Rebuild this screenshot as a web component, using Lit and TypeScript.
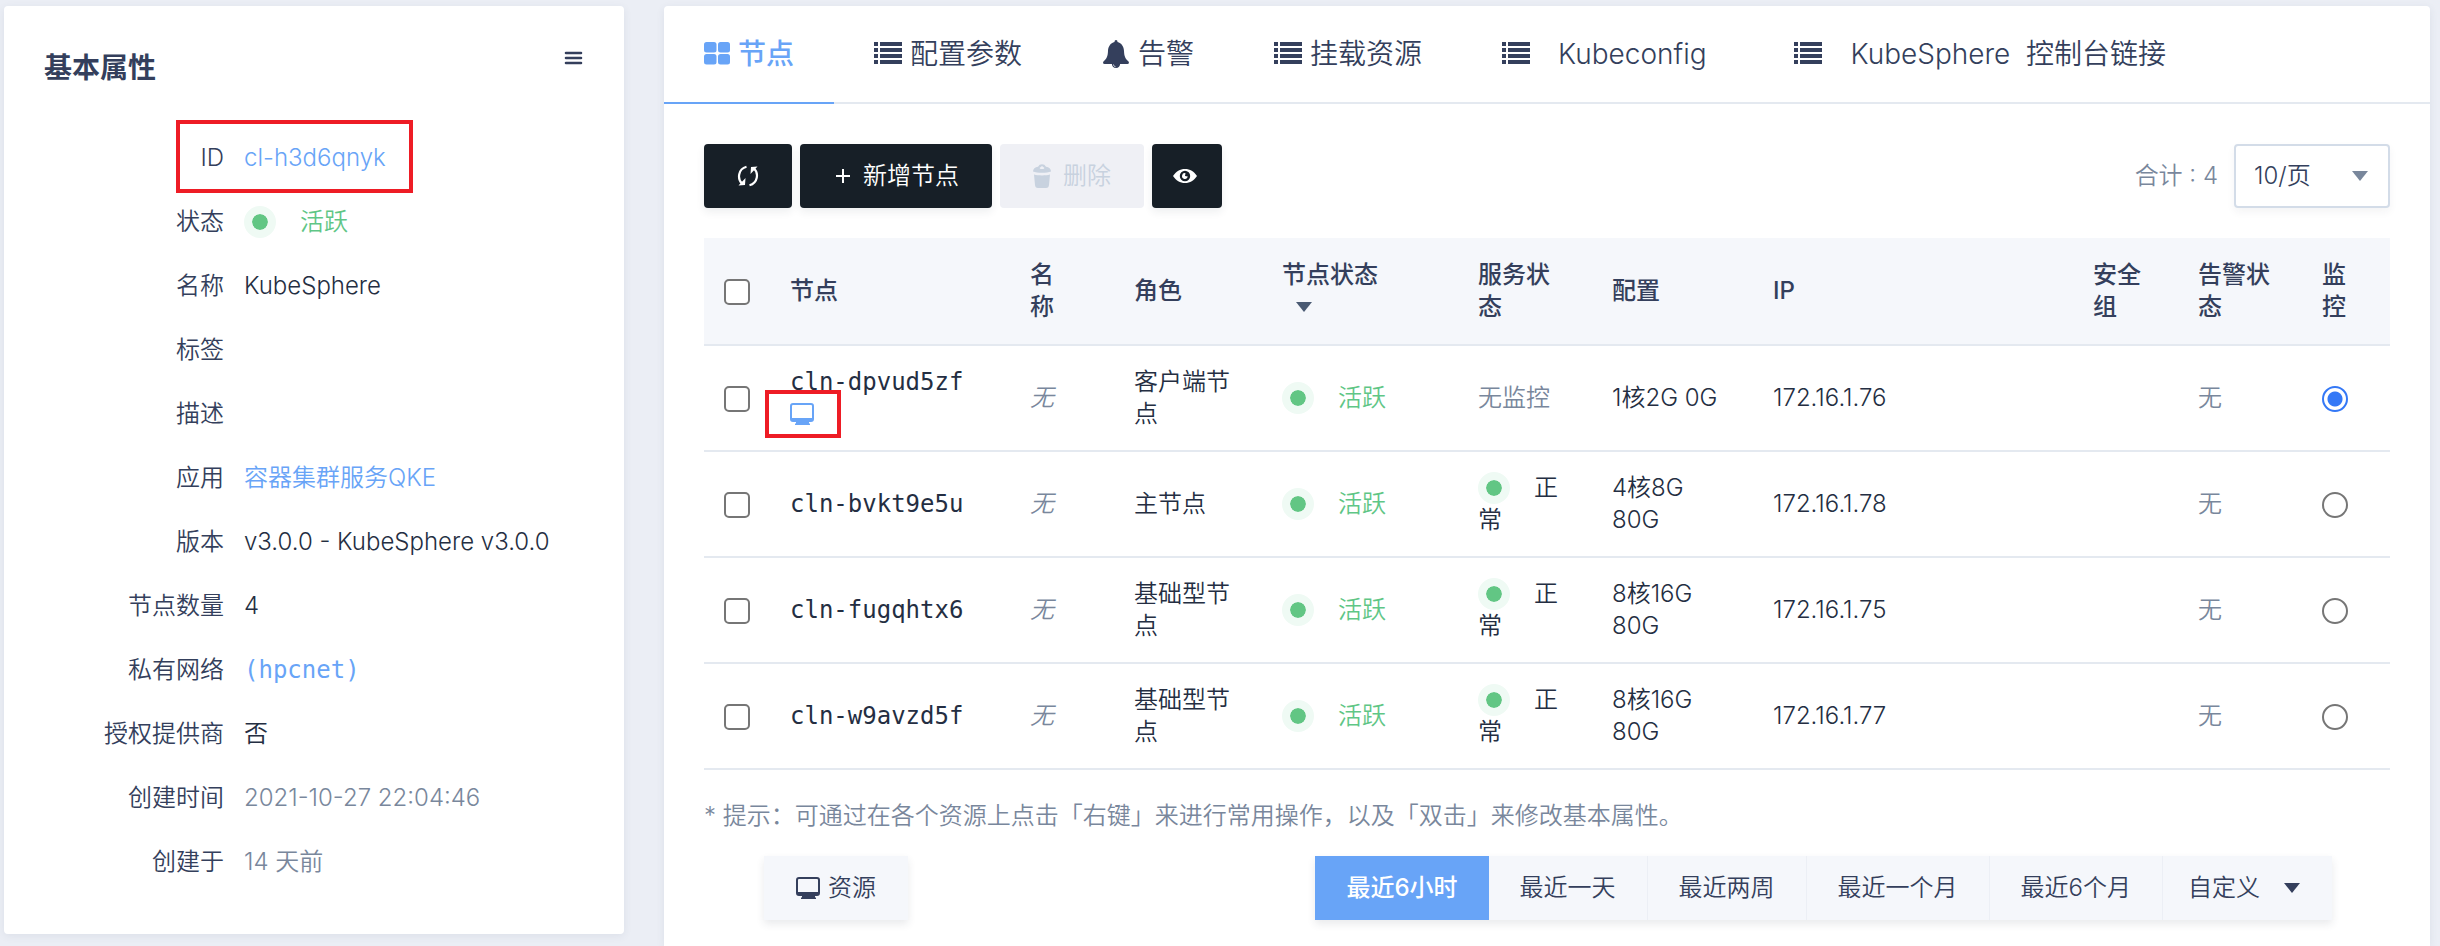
import { LitElement, html, css, svg } from "lit";
import { customElement } from "lit/decorators.js";

const icon = (name: string, w: number, h: number, vb: string, body: unknown) =>
  html`<svg class="icon ${name}" width=${w} height=${h} viewBox=${vb} aria-hidden="true">${body}</svg>`;

const gridIcon = () =>
  icon("grid", 26, 24, "0 0 26 24", svg`
    <rect x="0" y="0" width="12.500" height="10.500" rx="2.500"/><rect x="14" y="0" width="12" height="10.500" rx="2.500"/>
    <rect x="0" y="12" width="12.500" height="10.500" rx="2.500"/><rect x="14" y="12" width="12" height="10.500" rx="2.500"/>`);

const listIcon = () =>
  icon("list", 28, 24, "0 0 28 24", [0, 6, 12, 18].map((i) => svg`
    <rect x="0" y=${i} width="4" height="4"/><rect x="6" y=${i} width="22" height="4"/>`));

const bellIcon = () =>
  icon("bell", 28, 28, "0 0 28 28", svg`
    <path d="M14 0c1 0 1.500.9 1.500 2 4 1 6.300 4.500 6.500 9 .2 5.200 1.200 7.500 4.300 10.200 1 .9.900 2.800-.8 2.800H2.500c-1.700 0-1.800-1.900-.8-2.800C4.800 18.500 5.800 16.200 6 11c.2-4.500 2.500-8 6.500-9 0-1.100.5-2 1.500-2z"/>
    <path d="M9.800 23.500h8.400c0 2.600-1.700 4.500-4.200 4.500s-4.200-1.900-4.200-4.500z"/>
    <path d="M11.500 24.500c0 1.200.8 2 2 2.200" fill="none" stroke="#fff" stroke-width=".8"/>`);

const monitorIcon = () =>
  icon("monitor", 24, 24, "0 0 24 24", svg`
    <path fill-rule="evenodd" d="M3 1h18a3 3 0 0 1 3 3v13a3 3 0 0 1-3 3h-2v1l1 1v1H5v-1l1-1v-1H3a3 3 0 0 1-3-3V4a3 3 0 0 1 3-3zm0 2a1 1 0 0 0-1 1v12h20V4a1 1 0 0 0-1-1z"/>`);

const refreshIcon = () =>
  icon("refresh", 22, 22, "0 0 22 22", svg`
    <path d="M9.500 1.800C1 4 .2 14 5 18.500M12.500 20.200C21 18 21.800 8 17 3.500" fill="none" stroke="currentColor" stroke-width="2.200"/>
    <path d="M1.500 20.500l6.500-.500.500-7zM20.500 1.500L14 2l-.500 7z"/>`);

const plusIcon = () =>
  icon("plus", 18, 14, "0 0 18 14", svg`<path d="M9 0h2v6h6v2h-6v6H9V8H3V6h6z"/>`);

const trashIcon = () =>
  icon("trash", 18, 24, "0 0 18 24", svg`
    <path fill-rule="evenodd" d="M0 7.500C0 5 2 3 5 2.800a4.500 4.500 0 0 1 8 0c3 .2 5 2.200 5 4.700C14 9.200 4 9.200 0 7.500zM6.500 4l2.500-2 2.500 2-1 1h-3z"/>
    <path d="M1 10.500c4 1.200 12 1.200 16 0L16 21c-.2 2-1 3-3 3H5c-2 0-2.800-1-3-3z"/>`);

const eyeIcon = () =>
  icon("eye", 24, 14, "0 0 24 14", svg`
    <path fill-rule="evenodd" d="M12 0c5 0 9 2.500 12 7-3 4.500-7 7-12 7S3 11.500 0 7C3 2.500 7 0 12 0zm0 1.800a5.200 5.200 0 1 0 0 10.400 5.200 5.200 0 0 0 0-10.400zm.5 2.400L12 7l2.800.5a2.900 2.900 0 1 1-2.300-3.300z"/>`);

const menuIcon = () =>
  icon("menu", 20, 14, "0 0 20 14", svg`<path d="M2 2h15M2 7h15M2 12h15" stroke="currentColor" stroke-width="2.600" stroke-linecap="round"/>`);

const caret = () => icon("caret", 16, 10, "0 0 16 10", svg`<path d="M0 0h16L8 10z"/>`);

interface Node {
  id: string;
  role: string;
  service: boolean;
  config: string;
  ip: string;
  console?: boolean;
}

@customElement("app-root")
export class AppRoot extends LitElement {
  static styles = css`
    :host {
      display: flex;
      gap: 40px;
      align-items: stretch;
      box-sizing: border-box;
      height: 100vh;
      overflow: hidden;
      padding: 6px 10px 0 4px;
      background: #ebeef5;
      color: #343f5c;
      font: 350 24px/32px Inter, "Noto Sans CJK SC", sans-serif;
    }
    *, *::after { box-sizing: border-box; }
    button, select, input { font: inherit; color: inherit; margin: 0; }
    a { color: #68a4f7; text-decoration: none; }
    .icon { fill: currentColor; flex: none; display: block; }
    .card {
      background: #fff;
      border-radius: 4px;
      box-shadow: 0 2px 8px rgba(52, 63, 92, 0.08);
    }
    .side { width: 620px; flex: none; align-self: flex-start; padding: 40px; }
    .side-head { display: flex; justify-content: space-between; align-items: flex-start; }
    .side h2 { margin: 0; font-size: 28px; line-height: 44px; font-weight: 600; }
    .menu-btn { border: 0; background: none; padding: 5px 0 0; }
    .props { margin: 36px 0 0; }
    .prop { display: grid; grid-template-columns: 180px 1fr; column-gap: 20px; height: 64px; align-items: center; position: relative; }
    .prop dt { text-align: right; color: #343f5c; }
    .prop dd { margin: 0; color: #242e42; white-space: nowrap; }
    .prop dd.muted { color: #79879c; }
    .mono { font-family: "DejaVu Sans Mono", monospace; }
    .marked::after {
      content: "";
      position: absolute;
      border: 4px solid #ee1c25;
      pointer-events: none;
    }
    .prop.marked::after { left: 132px; top: -6px; width: 237px; height: 73px; }
    .status { display: flex; align-items: center; gap: 24px; color: #5fc686; }
    .dot {
      display: inline-block;
      width: 32px;
      height: 32px;
      border-radius: 50%;
      border: 8px solid #effaf4;
      background: #62c684;
      background-clip: padding-box;
      vertical-align: top;
    }
    .main { flex: 1; min-width: 0; border-bottom-left-radius: 0; border-bottom-right-radius: 0; }
    .tabs { display: flex; border-bottom: 2px solid #e4e9f0; height: 98px; }
    .tab {
      display: flex;
      align-items: center;
      gap: 8px;
      padding: 0 40px;
      margin-bottom: -2px;
      border: 0;
      border-bottom: 2px solid transparent;
      background: none;
      font-size: 28px;
      line-height: 40px;
      white-space: pre;
    }
    .tab.active { color: #68a4f7; border-color: #68a4f7; font-weight: 500; }
    .tab.wide { gap: 28px; }
    .body { padding: 40px; }
    .toolbar { display: flex; gap: 8px; align-items: center; }
    .btn {
      height: 64px;
      border: 0;
      border-radius: 4px;
      background: #171f27;
      color: #fff;
      display: flex;
      align-items: center;
      justify-content: center;
      gap: 12px;
      padding: 0 33px;
      box-shadow: 0 4px 8px rgba(36, 46, 66, 0.08);
    }
    .btn.eye-btn { padding: 0 25px 0 21px; }
    .btn:disabled { background: #eff0f5; color: #c8d2df; box-shadow: none; }
    .total { margin-left: auto; margin-right: 8px; color: #79879c; }
    .picker { position: relative; display: flex; align-items: center; }
    .picker select {
      appearance: none;
      width: 156px;
      height: 64px;
      padding: 0 20px 0 18px;
      border: 2px solid #d3dce8;
      border-radius: 4px;
      background: #fff;
      box-shadow: 0 4px 8px rgba(36, 46, 66, 0.05);
    }
    .picker .icon { position: absolute; right: 22px; color: #79879c; pointer-events: none; }
    table { width: 100%; margin-top: 30px; border-collapse: separate; border-spacing: 0; table-layout: fixed; }
    th, td { text-align: left; vertical-align: middle; padding: 20px; border-bottom: 2px solid #e4e9f0; color: #242e42; }
    th { background: #f5f7fb; color: #343f5c; font-weight: 500; padding-top: 21px; padding-bottom: 21px; }
    .c-check { width: 66px; }
    .c-node { width: 240px; }
    .c-name { width: 104px; }
    .c-role { width: 148px; }
    .c-state { width: 196px; }
    .c-service { width: 134px; }
    .c-config { width: 161px; }
    .c-group { width: 105px; }
    .c-alarm { width: 124px; }
    .c-watch { width: 88px; }
    .narrow { padding-right: 40px; }
    .check { padding-right: 0; }
    td.none { color: #79879c; }
    th .caret { margin: 11px 0 11px 14px; color: #4a5a73; }
    td.console { position: relative; }
    td.console .monitor { color: #68a4f7; margin: 4px 0; }
    td.marked::after { left: -5px; top: 44px; width: 76px; height: 48px; }
    .service .dot { margin-right: 24px; }
    input[type="checkbox"], input[type="radio"] {
      appearance: none;
      display: block;
      width: 26px;
      height: 26px;
      margin-top: 2px;
      border: 2px solid #767676;
      border-radius: 5px;
      background: #fff;
    }
    input[type="radio"] { border-radius: 50%; }
    input[type="radio"]:checked { border-color: #3478f6; background: radial-gradient(circle, #3478f6 7px, #fff 8px); }
    .hint { margin: 30px 0 24px; color: #79879c; }
    .footer { display: flex; justify-content: space-between; padding: 0 58px 0 60px; }
    .group { display: flex; box-shadow: 0 4px 8px rgba(36, 46, 66, 0.1); }
    .seg {
      height: 64px;
      display: flex;
      align-items: center;
      gap: 8px;
      padding: 0 31px;
      border: 0;
      border-right: 1px solid #eceff5;
      background: #f5f7fb;
      white-space: nowrap;
    }
    .seg:only-child { padding: 0 32px; }
    .seg:last-child { border-right: 0; }
    .seg.active { background: #68a4f7; color: #fff; font-weight: 500; border-right: 0; }
    .seg.custom { gap: 24px; padding: 0 32px 0 25px; }
  `;

  private nodes: Node[] = [
    { id: "cln-dpvud5zf", role: "客户端节点", service: false, config: "1核2G 0G", ip: "172.16.1.76", console: true },
    { id: "cln-bvkt9e5u", role: "主节点", service: true, config: "4核8G 80G", ip: "172.16.1.78" },
    { id: "cln-fugqhtx6", role: "基础型节点", service: true, config: "8核16G 80G", ip: "172.16.1.75" },
    { id: "cln-w9avzd5f", role: "基础型节点", service: true, config: "8核16G 80G", ip: "172.16.1.77" },
  ];

  private active() {
    return html`<span class="status"><span class="dot"></span>活跃</span>`;
  }

  private side() {
    return html`
      <aside class="card side">
        <div class="side-head">
          <h2>基本属性</h2>
          <button class="menu-btn" aria-label="菜单">${menuIcon()}</button>
        </div>
        <dl class="props">
          <div class="prop marked"><dt>ID</dt><dd><a href="#">cl-h3d6qnyk</a></dd></div>
          <div class="prop"><dt>状态</dt><dd>${this.active()}</dd></div>
          <div class="prop"><dt>名称</dt><dd>KubeSphere</dd></div>
          <div class="prop"><dt>标签</dt><dd></dd></div>
          <div class="prop"><dt>描述</dt><dd></dd></div>
          <div class="prop"><dt>应用</dt><dd><a href="#">容器集群服务QKE</a></dd></div>
          <div class="prop"><dt>版本</dt><dd>v3.0.0 - KubeSphere v3.0.0</dd></div>
          <div class="prop"><dt>节点数量</dt><dd>4</dd></div>
          <div class="prop"><dt>私有网络</dt><dd><a class="mono" href="#">(hpcnet)</a></dd></div>
          <div class="prop"><dt>授权提供商</dt><dd>否</dd></div>
          <div class="prop"><dt>创建时间</dt><dd class="muted">2021-10-27 22:04:46</dd></div>
          <div class="prop"><dt>创建于</dt><dd class="muted">14 天前</dd></div>
        </dl>
      </aside>`;
  }

  private row(n: Node, i: number) {
    return html`
      <tr>
        <td class="check"><input type="checkbox" aria-label=${n.id} /></td>
        <td class="mono ${n.console ? "console marked" : ""}">${n.id}${n.console ? monitorIcon() : ""}</td>
        <td class="narrow none"><em>无</em></td>
        <td>${n.role}</td>
        <td>${this.active()}</td>
        <td class="service ${n.service ? "" : "none"}">${n.service ? html`<span class="dot"></span>正常` : "无监控"}</td>
        <td>${n.config}</td>
        <td>${n.ip}</td>
        <td></td>
        <td class="none">无</td>
        <td><input type="radio" name="watch" aria-label="监控 ${n.id}" ?checked=${i === 0} /></td>
      </tr>`;
  }

  render() {
    return html`
      ${this.side()}
      <main class="card main">
        <nav class="tabs">
          <button class="tab active">${gridIcon()}<span>节点</span></button>
          <button class="tab">${listIcon()}<span>配置参数</span></button>
          <button class="tab">${bellIcon()}<span>告警</span></button>
          <button class="tab">${listIcon()}<span>挂载资源</span></button>
          <button class="tab wide">${listIcon()}<span>Kubeconfig </span></button>
          <button class="tab wide">${listIcon()}<span>KubeSphere  控制台链接</span></button>
        </nav>
        <div class="body">
          <div class="toolbar">
            <button class="btn" aria-label="刷新">${refreshIcon()}</button>
            <button class="btn">${plusIcon()}<span>新增节点</span></button>
            <button class="btn" disabled>${trashIcon()}<span>删除</span></button>
            <button class="btn eye-btn" aria-label="显示">${eyeIcon()}</button>
            <label class="total" for="size">合计 : 4</label>
            <div class="picker">
              <select id="size"><option>10/页</option></select>
              ${caret()}
            </div>
          </div>
          <table>
            <colgroup>
              <col class="c-check" /><col class="c-node" /><col class="c-name" /><col class="c-role" />
              <col class="c-state" /><col class="c-service" /><col class="c-config" /><col />
              <col class="c-group" /><col class="c-alarm" /><col class="c-watch" />
            </colgroup>
            <thead>
              <tr>
                <th class="check"><input type="checkbox" aria-label="全选" /></th>
                <th>节点</th>
                <th class="narrow">名称</th>
                <th>角色</th>
                <th>节点状态${caret()}</th>
                <th>服务状态</th>
                <th>配置</th>
                <th>IP</th>
                <th>安全组</th>
                <th>告警状态</th>
                <th class="narrow">监控</th>
              </tr>
            </thead>
            <tbody>${this.nodes.map((n, i) => this.row(n, i))}</tbody>
          </table>
          <p class="hint">* 提示：可通过在各个资源上点击「右键」来进行常用操作，以及「双击」来修改基本属性。</p>
          <div class="footer">
            <div class="group"><button class="seg">${monitorIcon()}<span>资源</span></button></div>
            <div class="group">
              <button class="seg active">最近6小时</button>
              <button class="seg">最近一天</button>
              <button class="seg">最近两周</button>
              <button class="seg">最近一个月</button>
              <button class="seg">最近6个月</button>
              <button class="seg custom"><span>自定义</span>${caret()}</button>
            </div>
          </div>
        </div>
      </main>`;
  }
}
